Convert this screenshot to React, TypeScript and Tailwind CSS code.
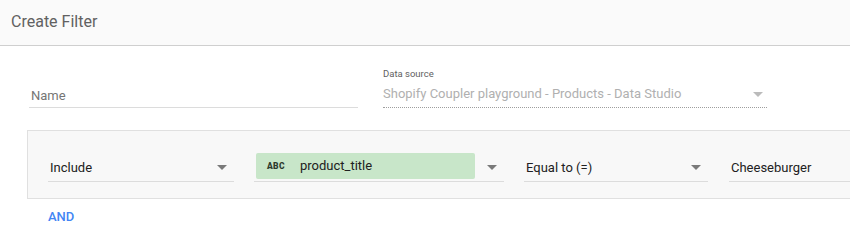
import React from "react";

function Caret({ className = "" }: { className?: string }) {
  return (
    <svg width="10" height="5" viewBox="0 0 10 5" className={className}>
      <path d="M0 0h10L5 5z" fill="#7a7a7a" />
    </svg>
  );
}

function SelectField({ label, width, caret = true }: { label: string; width: string; caret?: boolean }) {
  return (
    <div className={`${width} shrink-0 h-[29px] flex items-center border-b border-[#dcdcdc] pl-[2px] pr-[7px] pt-[2px]`}>
      <span className="flex-1 text-[13px] text-[#212121]">{label}</span>
      {caret && <Caret className="-mt-[2px]" />}
    </div>
  );
}

export default function App() {
  return (
    <div className="w-[850px] h-[235px] overflow-hidden bg-white font-['Roboto',sans-serif]">
      <header className="h-[46px] bg-[#fafafa] border-b border-[#cfcfcf] px-[11px] pt-[11px]">
        <h1 className="text-[16px] leading-[22px] text-[#616161]">Create Filter</h1>
      </header>

      <div className="flex items-end pl-[29px] pt-[21px]">
        <div className="w-[329px]">
          <div className="h-[25px] border-b border-[#dcdcdc] pl-[2px] pt-[2px] text-[13px] leading-[22px] text-[#757575]">
            Name
          </div>
        </div>
        <div className="ml-[25px] w-[384px]">
          <div className="text-[9.5px] leading-[14px] text-[#616161]">Data source</div>
          <div className="h-[27px] flex items-center border-b border-dotted border-[#9e9e9e] pr-[4px]">
            <span className="flex-1 text-[13px] text-[#b0b0b0]">
              Shopify Coupler playground - Products - Data Studio
            </span>
            <Caret className="opacity-50" />
          </div>
        </div>
      </div>

      <div className="ml-[27px] mt-[22px] w-[840px] h-[69px] border border-[#e0e0e0] bg-[#f8f8f8] pl-[20px] pt-[22px] flex gap-[20px] overflow-hidden">
        <SelectField label="Include" width="w-[186px]" />
        <div className="w-[250px] shrink-0 h-[29px] flex items-start border-b border-[#dcdcdc] pr-[7px]">
          <div className="ml-[2px] w-[219px] h-[26px] rounded-[2px] bg-[#c8e6c9] flex items-center pl-[11px]">
            <span className="text-[8.5px] font-black tracking-[0.3px] text-[#2e3b2e] w-[33px]">ABC</span>
            <span className="text-[13px] text-[#212121]">product_title</span>
          </div>
          <div className="flex-1 h-[29px] flex items-center justify-end">
            <Caret />
          </div>
        </div>
        <SelectField label="Equal to (=)" width="w-[184px]" />
        <div className="ml-[1px] shrink-0">
          <SelectField label="Cheeseburger" width="w-[200px]" caret={false} />
        </div>
      </div>

      <div className="pl-[48px] pt-[10px] text-[13px] leading-[16px] font-medium text-[#4285f4]">AND</div>
    </div>
  );
}
